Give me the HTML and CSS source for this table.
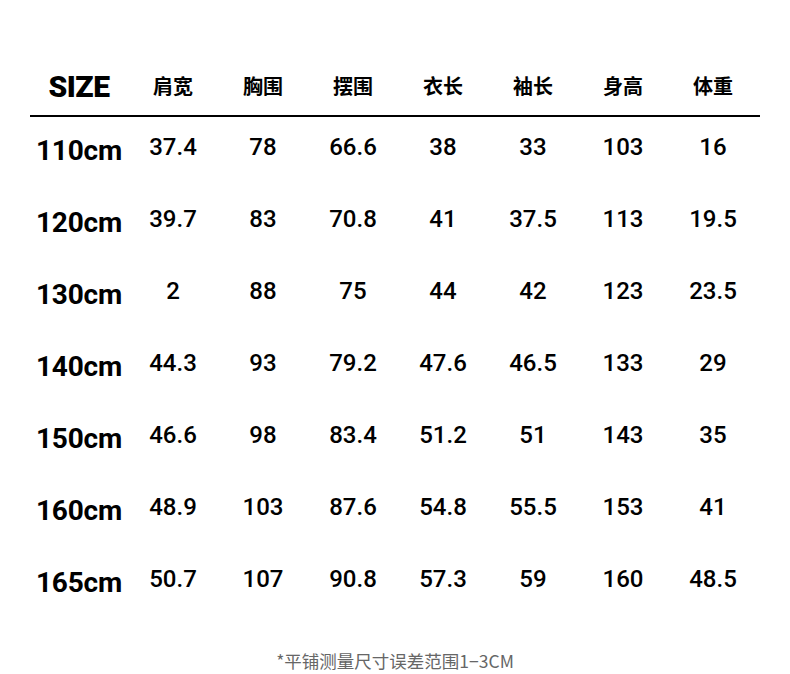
FILE: index.html
```html
<!DOCTYPE html>
<html lang="zh">
<head>
<meta charset="utf-8">
<link rel="stylesheet" href="styles.css">
</head>
<body>
<div class="page">
  <div class="table">
    <div class="row head">
      <div class="c size">SIZE</div>
      <div class="c">肩宽</div>
      <div class="c">胸围</div>
      <div class="c">摆围</div>
      <div class="c">衣长</div>
      <div class="c">袖长</div>
      <div class="c">身高</div>
      <div class="c">体重</div>
    </div>
    <div class="row"><div class="c lab">110cm</div><div class="c">37.4</div><div class="c">78</div><div class="c">66.6</div><div class="c">38</div><div class="c">33</div><div class="c">103</div><div class="c">16</div></div>
    <div class="row"><div class="c lab">120cm</div><div class="c">39.7</div><div class="c">83</div><div class="c">70.8</div><div class="c">41</div><div class="c">37.5</div><div class="c">113</div><div class="c">19.5</div></div>
    <div class="row"><div class="c lab">130cm</div><div class="c">2</div><div class="c">88</div><div class="c">75</div><div class="c">44</div><div class="c">42</div><div class="c">123</div><div class="c">23.5</div></div>
    <div class="row"><div class="c lab">140cm</div><div class="c">44.3</div><div class="c">93</div><div class="c">79.2</div><div class="c">47.6</div><div class="c">46.5</div><div class="c">133</div><div class="c">29</div></div>
    <div class="row"><div class="c lab">150cm</div><div class="c">46.6</div><div class="c">98</div><div class="c">83.4</div><div class="c">51.2</div><div class="c">51</div><div class="c">143</div><div class="c">35</div></div>
    <div class="row"><div class="c lab">160cm</div><div class="c">48.9</div><div class="c">103</div><div class="c">87.6</div><div class="c">54.8</div><div class="c">55.5</div><div class="c">153</div><div class="c">41</div></div>
    <div class="row"><div class="c lab">165cm</div><div class="c">50.7</div><div class="c">107</div><div class="c">90.8</div><div class="c">57.3</div><div class="c">59</div><div class="c">160</div><div class="c">48.5</div></div>
  </div>
  <div class="note">*平铺测量尺寸误差范围1−3CM</div>
</div>
</body>
</html>
```
FILE: styles.css
```css
html, body { margin: 0; padding: 0; background: #fff; }
body { width: 790px; height: 674px; overflow: hidden; }
.page { padding: 59px 30px 0 30px; }
.table { width: 730px; }
.row {
  display: grid;
  grid-template-columns: 98px repeat(7, 90px);
  height: 72px;
  align-items: center;
  font-family: Roboto, "Noto Sans", sans-serif;
  font-weight: 500;
  font-size: 24px;
  color: #000;
}
.row .c { text-align: center; line-height: 1; }
.row.head {
  height: 56px;
  border-bottom: 2px solid #000;
  font-family: "Noto Sans CJK SC", sans-serif;
  font-weight: 700;
  font-size: 20px;
  margin-bottom: -6px;
}
.row.head .c { padding-bottom: 2px; }
.row.head .size {
  font-family: Roboto, sans-serif;
  font-size: 30px;
  font-weight: 900;
  letter-spacing: -0.5px;
  padding-bottom: 0;
}
.row .lab {
  font-size: 28px;
  font-weight: 700;
  padding-top: 7px;
  letter-spacing: -0.2px;
}
.note {
  margin-top: 37px;
  text-align: center;
  font-family: "Noto Sans CJK SC", sans-serif;
  font-size: 17.5px;
  line-height: 18px;
  color: #666;
}
```
